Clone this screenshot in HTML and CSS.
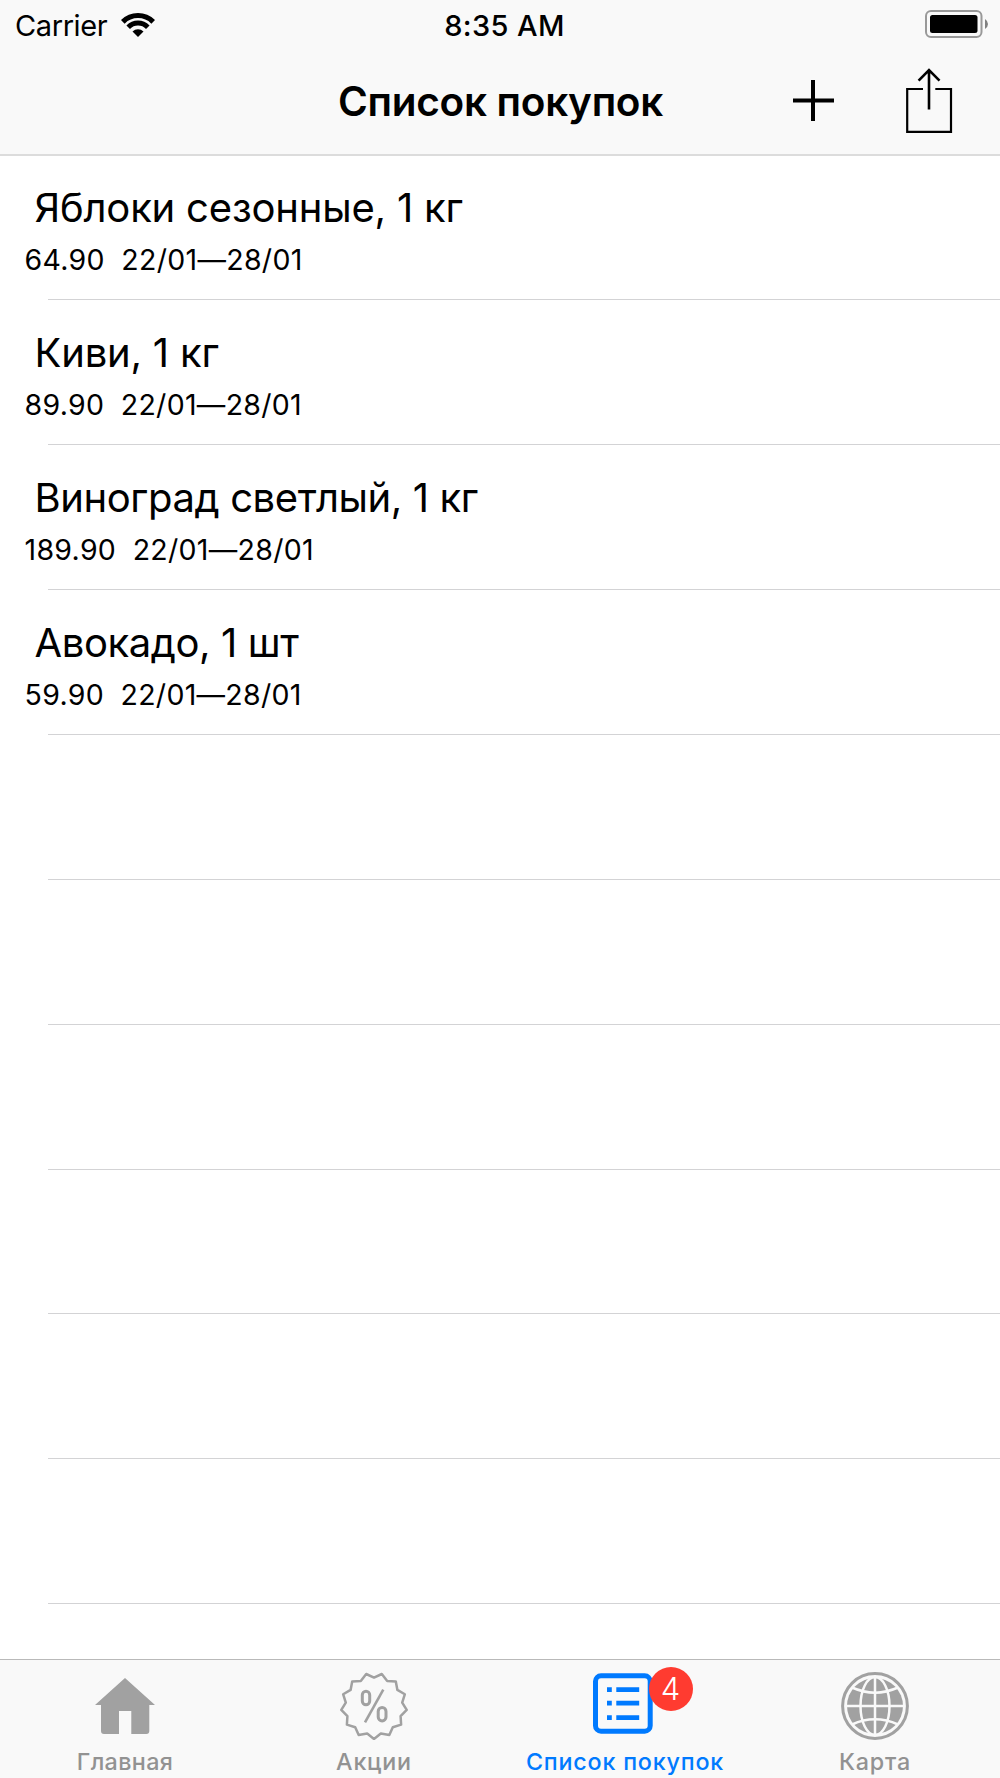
FILE: index.html
```html
<!DOCTYPE html>
<html lang="ru">
<head>
    <meta charset="UTF-8">
    <meta name="viewport" content="width=device-width, initial-scale=1.0">
    <title>Список покупок</title>
    <link rel="stylesheet" href="styles.css">
</head>
<body>
    <div class="app">
        <header class="header">
            <div class="status">
                <div class="carrier">
                    <span>Carrier</span>
                    <svg class="wifi" width="34" height="26" viewBox="0 0 34 26">
                        <path d="M1.8 9.8A21.5 21.5 0 0 1 32.2 9.8" fill="none" stroke="#000" stroke-width="5.2"/>
                        <path d="M7.2 15.2A13.8 13.8 0 0 1 26.8 15.2" fill="none" stroke="#000" stroke-width="5"/>
                        <path d="M17 25L11.5 19.5A7.8 7.8 0 0 1 22.5 19.5Z"/>
                    </svg>
                </div>
                <span class="time">8:35 AM</span>
                <svg class="battery" width="64" height="28" viewBox="0 0 64 28">
                    <rect x="1" y="1" width="55.5" height="26" rx="5" fill="none" stroke="#999" stroke-width="2"/>
                    <rect x="5" y="5" width="47.5" height="18" rx="2.5"/>
                    <path d="M60 9Q63 11 63 14T60 19Z" fill="#808080"/>
                </svg>
            </div>
            <div class="nav">
                <h1 class="nav-title">Список покупок</h1>
                <div class="actions">
                    <svg width="41" height="41" viewBox="0 0 41 41">
                        <path d="M20 0V41M0 20.5H41" stroke="#000" stroke-width="4"/>
                    </svg>
                    <svg width="47" height="65" viewBox="0 0 47 65" fill="none" stroke="#000" stroke-width="2.2">
                        <path d="M17 21H1.2V63.9H45V21H29.3"/>
                        <path d="M23 41.5V2M12.6 12.7L23 2L33.5 12.7" stroke-width="2.6"/>
                    </svg>
                </div>
            </div>
        </header>

        <ul class="list">
            <li class="item">
                <div class="name">Яблоки сезонные, 1 кг</div>
                <div class="info"><span>64.90</span><span>22/01—28/01</span></div>
            </li>
            <li class="item">
                <div class="name">Киви, 1 кг</div>
                <div class="info"><span>89.90</span><span>22/01—28/01</span></div>
            </li>
            <li class="item">
                <div class="name tight">Виноград светлый, 1 кг</div>
                <div class="info"><span>189.90</span><span>22/01—28/01</span></div>
            </li>
            <li class="item">
                <div class="name tight">Авокадо, 1 шт</div>
                <div class="info"><span>59.90</span><span>22/01—28/01</span></div>
            </li>
            <li class="item"></li>
            <li class="item"></li>
            <li class="item"></li>
            <li class="item"></li>
            <li class="item"></li>
            <li class="item"></li>
        </ul>

        <nav class="tabs">
            <a class="tab">
                <span class="icon">
                    <svg width="60" height="68" viewBox="0 0 60 68" fill="#a1a1a1">
                        <path d="M30 6L60 33H54.3V59Q54.3 62 51.3 62H36.3V39H24V62H9Q6 62 6 59V33H0Z"/>
                    </svg>
                </span>
                <span class="label home">Главная</span>
            </a>
            <a class="tab deals">
                <span class="icon">
                    <svg width="68" height="68" viewBox="0 0 68 68" fill="none" stroke="#a1a1a1">
                        <polygon stroke-width="2.5" stroke-linejoin="round" points="34,66.9 40.8,61.6 49.3,63.1 52.8,55.3 61.1,52.6 60.6,44.1 66.7,37.9 62.2,30.6 64.8,22.3 57.4,17.9 55.8,9.4 47.2,8.9 41.8,2 34,5.6 26.2,2 20.8,8.9 12.2,9.4 10.6,17.9 3.2,22.3 5.8,30.6 1.3,37.9 7.4,44.1 6.9,52.6 15.2,55.3 18.7,63.1 27.2,61.6"/>
                        <rect x="22.3" y="19.3" width="7.4" height="13.4" rx="3.7" stroke-width="3"/>
                        <rect x="38.2" y="35.5" width="7.8" height="13.4" rx="3.9" stroke-width="3"/>
                        <path d="M25 50.3L43.3 17.7" stroke-width="2.6"/>
                    </svg>
                </span>
                <span class="label">Акции</span>
            </a>
            <a class="tab active">
                <span class="icon">
                    <svg width="60" height="68" viewBox="0 0 60 68" fill="none" stroke="#007aff">
                        <rect x="2.5" y="3.8" width="54.7" height="55.4" rx="5.5" stroke-width="5"/>
                        <path d="M14 17.7H18.8M23.3 17.7H46.2M14 31.2H18.8M23.3 31.2H46.2M14 45.7H18.8M23.3 45.7H46.2" stroke-width="4.8"/>
                    </svg>
                    <span class="badge">4</span>
                </span>
                <span class="label">Список покупок</span>
            </a>
            <a class="tab">
                <span class="icon">
                    <svg width="68" height="68" viewBox="0 0 68 68" fill="none" stroke="#f9f9f9" stroke-width="2.5">
                        <circle cx="34" cy="34" r="32.4" stroke="#a1a1a1" stroke-width="3"/>
                        <circle cx="34" cy="34" r="28" fill="#a1a1a1" stroke="none"/>
                        <path d="M34 5V63M5 34H63"/>
                        <ellipse cx="34" cy="34" rx="14.5" ry="29"/>
                        <path d="M11 15.5Q34 25.8 57 15.5M11 52.5Q34 42.2 57 52.5"/>
                    </svg>
                </span>
                <span class="label">Карта</span>
            </a>
        </nav>
    </div>
</body>
</html>
```
FILE: styles.css
```css
* {
    box-sizing: border-box;
}

body {
    margin: 0;
    background-color: #fff;
    color: #000;
    font-family: Inter, "Liberation Sans", sans-serif;
}

svg {
    display: block;
}

.app {
    display: flex;
    flex-direction: column;
    height: 1778px;
    overflow: hidden;
}

.header {
    flex: none;
    height: 155.6px;
    background-color: #f9f9f9;
    border-bottom: 2px solid #dcdcdc;
}

.status {
    display: grid;
    grid-template-columns: 1fr auto 1fr;
    align-items: center;
    height: 50px;
    padding: 1px 11px 0 15px;
    font-size: 29px;
    line-height: 36px;
}

.carrier {
    display: flex;
    align-items: center;
    gap: 14px;
    letter-spacing: -0.4px;
}

.wifi {
    margin-bottom: 2px;
}

.time {
    padding-left: 5px;
    font-weight: 500;
    letter-spacing: 0.4px;
}

.battery {
    justify-self: end;
    margin-bottom: 3px;
}

.nav {
    display: grid;
    grid-template-columns: 1fr auto 1fr;
    align-items: center;
    height: 102px;
    padding: 0 47px 0 48px;
}

.nav-title {
    grid-column: 2;
    margin: 2px 0 0;
    font-size: 40.5px;
    font-weight: 600;
    line-height: 48px;
    letter-spacing: -0.3px;
}

.actions {
    display: flex;
    justify-content: flex-end;
    align-items: center;
    gap: 72px;
    margin-top: -2px;
}

.list {
    flex: 1;
    margin: 0;
    padding: 0;
    list-style: none;
}

.item {
    height: 144.85px;
    padding: 28.4px 0 0 24.5px;
    background: linear-gradient(#d3d3d5, #d3d3d5) 48px 100% / 100% 1px no-repeat;
}

.name {
    padding-left: 10px;
    font-size: 40px;
    line-height: 48px;
    letter-spacing: -0.2px;
}

.tight {
    letter-spacing: -0.4px;
}

.info {
    display: flex;
    gap: 16.5px;
    margin-top: 10px;
    font-size: 28.5px;
    line-height: 36px;
    letter-spacing: 0.3px;
}

.tabs {
    display: grid;
    grid-template-columns: repeat(4, 1fr);
    flex: none;
    height: 119px;
    background-color: #f9f9f9;
    border-top: 1px solid #b9b9b9;
}

.tab {
    display: flex;
    flex-direction: column;
    align-items: center;
    padding-top: 12px;
    color: #929292;
}

.deals {
    padding-right: 2px;
}

.active {
    color: #007aff;
}

.active .icon {
    margin-right: 5px;
}

.icon {
    position: relative;
}

.label {
    margin-top: 7px;
    font-size: 23.3px;
    font-weight: 500;
    line-height: 30px;
    letter-spacing: 0.8px;
    white-space: nowrap;
}

.home {
    letter-spacing: 0.35px;
}

.badge {
    position: absolute;
    top: -5px;
    left: 56px;
    width: 44px;
    height: 44px;
    border-radius: 50%;
    background-color: #ff3b30;
    color: #fff;
    font-size: 31px;
    font-weight: 300;
    line-height: 44px;
    text-align: center;
}
```
